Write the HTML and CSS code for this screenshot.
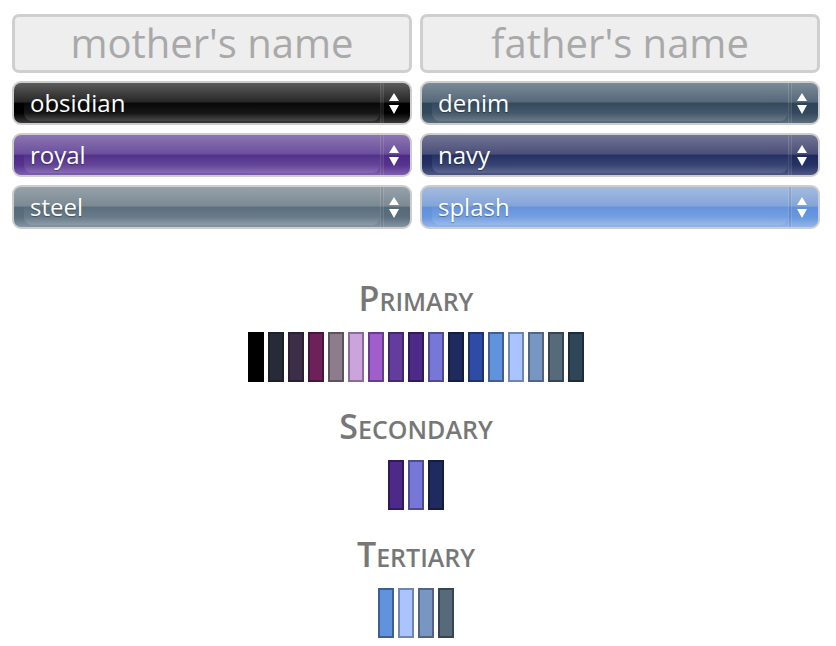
FILE: index.html
```html
<!DOCTYPE html>
<html>
<head>
<meta charset="utf-8">
<link rel="stylesheet" href="styles.css">
</head>
<body>
<div class="page">
  <div class="form">
    <div class="name-input">mother's name</div>
    <div class="name-input">father's name</div>

    <div class="select obsidian"><span class="label">obsidian</span><span class="arrows"><svg width="10" height="21" viewBox="0 0 10 21"><path d="M5 0 L10 8 L0 8 Z M0 12 L10 12 L5 21 Z" fill="#fff"/></svg></span></div>
    <div class="select denim"><span class="label">denim</span><span class="arrows"><svg width="10" height="21" viewBox="0 0 10 21"><path d="M5 0 L10 8 L0 8 Z M0 12 L10 12 L5 21 Z" fill="#fff"/></svg></span></div>

    <div class="select royal"><span class="label">royal</span><span class="arrows"><svg width="10" height="21" viewBox="0 0 10 21"><path d="M5 0 L10 8 L0 8 Z M0 12 L10 12 L5 21 Z" fill="#fff"/></svg></span></div>
    <div class="select navy"><span class="label">navy</span><span class="arrows"><svg width="10" height="21" viewBox="0 0 10 21"><path d="M5 0 L10 8 L0 8 Z M0 12 L10 12 L5 21 Z" fill="#fff"/></svg></span></div>

    <div class="select steel"><span class="label">steel</span><span class="arrows"><svg width="10" height="21" viewBox="0 0 10 21"><path d="M5 0 L10 8 L0 8 Z M0 12 L10 12 L5 21 Z" fill="#fff"/></svg></span></div>
    <div class="select splash"><span class="label">splash</span><span class="arrows"><svg width="10" height="21" viewBox="0 0 10 21"><path d="M5 0 L10 8 L0 8 Z M0 12 L10 12 L5 21 Z" fill="#fff"/></svg></span></div>
  </div>

  <div class="palette primary">
    <h2 class="heading">Primary</h2>
    <div class="swatches">
      <span class="sw c-black"></span>
      <span class="sw c-charcoal"></span>
      <span class="sw c-eggplant"></span>
      <span class="sw c-plum"></span>
      <span class="sw c-mauve"></span>
      <span class="sw c-lilac"></span>
      <span class="sw c-orchid"></span>
      <span class="sw c-grape"></span>
      <span class="sw c-royal"></span>
      <span class="sw c-periwinkle"></span>
      <span class="sw c-navy"></span>
      <span class="sw c-cobalt"></span>
      <span class="sw c-splash"></span>
      <span class="sw c-sky"></span>
      <span class="sw c-denim-light"></span>
      <span class="sw c-steel"></span>
      <span class="sw c-denim"></span>
    </div>
  </div>

  <div class="palette">
    <h2 class="heading">Secondary</h2>
    <div class="swatches">
      <span class="sw c-royal"></span>
      <span class="sw c-periwinkle"></span>
      <span class="sw c-navy"></span>
    </div>
  </div>

  <div class="palette">
    <h2 class="heading">Tertiary</h2>
    <div class="swatches">
      <span class="sw c-splash"></span>
      <span class="sw c-sky"></span>
      <span class="sw c-denim-light"></span>
      <span class="sw c-steel"></span>
    </div>
  </div>
</div>
</body>
</html>
```

FILE: styles.css
```css
html, body {
  margin: 0;
  padding: 0;
  background: #fff;
}

body {
  font-family: "Open Sans", "DejaVu Sans", sans-serif;
}

.page {
  width: 808px;
  padding: 14px 0 0 12px;
}

.form {
  display: grid;
  grid-template-columns: 400px 400px;
  column-gap: 8px;
  row-gap: 8px;
}

.name-input {
  box-sizing: border-box;
  height: 59px;
  border: 3px solid #cfcfcf;
  border-radius: 7px;
  background: #eeeeee;
  color: #a9a9a9;
  font-size: 40px;
  line-height: 52px;
  text-align: center;
}

.select {
  position: relative;
  box-sizing: border-box;
  height: 44px;
  border: 2px solid #cdcdcd;
  border-radius: 9px;
  display: flex;
  align-items: center;
  overflow: hidden;
  color: #fff;
}

.select::after {
  content: "";
  position: absolute;
  left: 10px;
  right: 30px;
  top: 50%;
  bottom: 2px;
  border-radius: 0 0 8px 8px;
  background: linear-gradient(to bottom, rgba(255,255,255,0.03), rgba(255,255,255,0.13));
}

.label {
  position: relative;
  z-index: 1;
  flex: 1;
  padding-left: 16px;
  font-size: 24px;
  line-height: 40px;
  text-shadow: 0 1px 1px rgba(0,0,0,0.35);
}

.arrows {
  position: relative;
  z-index: 1;
  box-sizing: border-box;
  width: 30px;
  height: 100%;
  padding-right: 4px;
  display: flex;
  align-items: center;
  justify-content: center;
  border-left: 1px solid rgba(255,255,255,0.14);
  box-shadow: inset 2px 0 0 rgba(0,0,0,0.12), inset 3px 0 0 rgba(255,255,255,0.12);
}

.obsidian {
  background: linear-gradient(to bottom, #5c5c5c 0%, #262626 48%, #000 50%, #000 75%, #3a3a3a 100%);
}
.denim {
  background: linear-gradient(to bottom, #7b8a96 0%, #55687a 48%, #2e4458 50%, #33495d 75%, #5b6d7d 100%);
}
.royal {
  background: linear-gradient(to bottom, #8c76b2 0%, #6a4e9c 48%, #4d2a88 50%, #56338e 75%, #7d5fae 100%);
}
.navy {
  background: linear-gradient(to bottom, #727494 0%, #4a4f78 48%, #1e2a5e 50%, #263266 75%, #4e5784 100%);
}
.steel {
  background: linear-gradient(to bottom, #96a2aa 0%, #7b8993 48%, #566a7a 50%, #5b6e7e 75%, #8494a2 100%);
}
.splash {
  background: linear-gradient(to bottom, #a2bbe0 0%, #84a4d8 48%, #6090dc 50%, #6797de 75%, #94b4e8 100%);
}

.palette {
  display: flex;
  flex-direction: column;
  align-items: center;
  height: 128px;
}

.palette.primary {
  margin-top: 49px;
}

.heading {
  margin: 0;
  font-size: 25px;
  line-height: 40px;
  font-weight: 600;
  color: #777;
  text-transform: uppercase;
  height: 40px;
  margin-bottom: 14px;
}

.heading::first-letter {
  font-size: 34px;
}

.swatches {
  display: flex;
  gap: 4px;
}

.sw {
  box-sizing: border-box;
  width: 16px;
  height: 50px;
  border: 2px solid;
}

.c-black { background: #000; border-color: #000; }
.c-charcoal { background: #272b38; border-color: #1c1f28; }
.c-eggplant { background: #3c2d48; border-color: #2a1f33; }
.c-plum { background: #6c2158; border-color: #48163b; }
.c-mauve { background: #8c7c8c; border-color: #5c525c; }
.c-lilac { background: #cca4dc; border-color: #8a6c9c; }
.c-orchid { background: #a05ecc; border-color: #6a3c8c; }
.c-grape { background: #643d9c; border-color: #42286c; }
.c-royal { background: #4d2a88; border-color: #32195c; }
.c-periwinkle { background: #7777d8; border-color: #4c4c94; }
.c-navy { background: #1f2b5f; border-color: #141c40; }
.c-cobalt { background: #2f4ca4; border-color: #1e326e; }
.c-splash { background: #6192dc; border-color: #3e5e94; }
.c-sky { background: #aac4ff; border-color: #6e86b0; }
.c-denim-light { background: #7896c2; border-color: #506486; }
.c-steel { background: #566a7a; border-color: #374553; }
.c-denim { background: #2f4558; border-color: #1e2c3a; }
```
